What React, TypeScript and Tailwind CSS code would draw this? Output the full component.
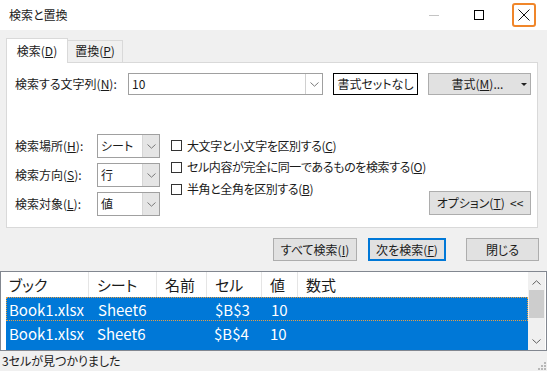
import React from 'react';

const Chevron = ({ up = false, color = '#606060' }: { up?: boolean; color?: string }) => (
  <svg width="9" height="5" viewBox="0 0 9 5" className="block">
    <path d={up ? 'M0.5 4.5 L4.5 0.8 L8.5 4.5' : 'M0.5 0.5 L4.5 4.2 L8.5 0.5'} fill="none" stroke={color} strokeWidth="1" />
  </svg>
);

function Combo({ value, width }: { value: string; width: string }) {
  return (
    <div className={`flex h-[24px] ${width} border border-[#a0a0a0] bg-white`}>
      <div className="flex flex-1 items-center pl-[3px] text-[12px] leading-none">{value}</div>
      <div className="flex w-[17px] items-center justify-center border-l border-[#d6d6d6] bg-[#e5e5e5]">
        <Chevron color="#7a7a7a" />
      </div>
    </div>
  );
}

function Check({ label, hk, h }: { label: string; hk: string; h: string }) {
  return (
    <div className={`flex ${h} items-center`}>
      <div className="h-[11px] w-[11px] border border-[#333] bg-white" />
      <span className="ml-[5px] text-[12px] leading-none tracking-[-0.4px]">
        {label}(<span className="underline">{hk}</span>)
      </span>
    </div>
  );
}

const rows = [
  { book: 'Book1.xlsx', sheet: 'Sheet6', cell: '$B$3', value: '10' },
  { book: 'Book1.xlsx', sheet: 'Sheet6', cell: '$B$4', value: '10' },
];

export default function App() {
  return (
    <div className="relative h-[371px] w-[547px] overflow-hidden whitespace-nowrap bg-[#f0f0f0] font-['Noto_Sans_CJK_JP','Noto_Sans',sans-serif] text-[#1a1a1a] [font-feature-settings:'palt']">
      {/* title bar */}
      <div className="flex h-[30px] items-center bg-white pl-[9px]">
        <span className="text-[12px] leading-none">検索と置換</span>
        <div className="ml-auto mr-[1px] flex h-full items-center">
          <div className="flex w-[45px] justify-center">
            <div className="h-px w-[10px] bg-[#c4c4c4]" />
          </div>
          <div className="flex w-[45px] justify-center">
            <div className="h-[10px] w-[10px] border border-black" />
          </div>
          <div className="flex w-[45px] justify-center">
            <div className="flex h-[24px] w-[24px] items-center justify-center rounded-[3px] border-2 border-[#f0862a]">
              <svg width="12" height="12" viewBox="0 0 12 12">
                <path d="M0.5 0.5 L11.5 11.5 M11.5 0.5 L0.5 11.5" stroke="#111" strokeWidth="1" />
              </svg>
            </div>
          </div>
        </div>
      </div>

      {/* tabs */}
      <div className="flex items-end pl-[6px] pt-[8px]">
        <div className="relative z-10 -mb-px flex h-[25px] w-[62px] items-center justify-center border border-b-0 border-[#d9d9d9] bg-white text-[12px] leading-none">
          検索(<span className="underline">D</span>)
        </div>
        <div className="flex h-[22px] w-[55px] items-center justify-center border border-b-0 border-l-0 border-[#d9d9d9] bg-[#f0f0f0] pb-[1px] text-[12px] leading-none">
          置換(<span className="underline">P</span>)
        </div>
      </div>

      {/* panel */}
      <div className="ml-[6px] h-[166px] w-[532px] border border-[#d9d9d9] bg-white pl-[8px] pr-[6px] pt-[10px]">
        <div className="flex h-[22px] items-center">
          <div className="w-[113px] text-[12px] leading-none">
            検索する文字列(<span className="underline">N</span>):
          </div>
          <div className="flex h-[22px] w-[195px] border border-[#a0a0a0] bg-white">
            <div className="flex flex-1 items-center pl-[3px] text-[12px] leading-none">10</div>
            <div className="flex w-[17px] items-center justify-center border-l border-[#d0d0d0]">
              <Chevron color="#7a7a7a" />
            </div>
          </div>
          <div className="ml-[10px] flex h-[22px] w-[85px] items-center justify-center border border-black bg-white text-[12px] leading-none">
            書式セットなし
          </div>
          <div className="relative ml-[10px] flex h-[22px] w-[103px] items-center justify-center border border-[#adadad] bg-[#e1e1e1] pr-[4px] text-[12px] leading-none">
            書式(<span className="underline">M</span>)...
            <svg width="6" height="3" viewBox="0 0 6 3" className="absolute right-[3px] top-[9px]">
              <path d="M0 0 L6 0 L3 3 Z" fill="#222" />
            </svg>
          </div>
        </div>

        <div className="mt-[39px] flex">
          <div className="flex flex-col gap-[5px]">
            {[
              ['検索場所', 'H', 'シート'],
              ['検索方向', 'S', '行'],
              ['検索対象', 'L', '値'],
            ].map(([l, k, v]) => (
              <div key={k} className="flex h-[24px] items-center">
                <div className="w-[82px] text-[12px] leading-none">
                  {l}(<span className="underline">{k}</span>):
                </div>
                <Combo value={v} width="w-[63px]" />
              </div>
            ))}
          </div>
          <div className="ml-[11px] flex flex-col pt-px">
            <Check label="大文字と小文字を区別する" hk="C" h="h-[21px]" />
            <Check label="セル内容が完全に同一であるものを検索する" hk="O" h="h-[22px]" />
            <Check label="半角と全角を区別する" hk="B" h="h-[22px]" />
          </div>
          <div className="ml-auto mb-[1px] flex h-[24px] w-[102px] items-center justify-center self-end border border-[#adadad] bg-[#e1e1e1] text-[12px] leading-none">
            オプション(<span className="underline">T</span>)&nbsp;&nbsp;&lt;&lt;
          </div>
        </div>
      </div>

      {/* action buttons */}
      <div className="mt-[10px] flex justify-end pr-[8px]">
        <div className="flex h-[23px] w-[84px] items-center justify-center border border-[#adadad] bg-[#e1e1e1] text-[12px] leading-none">
          すべて検索(<span className="underline">I</span>)
        </div>
        <div className="ml-[11px] flex h-[23px] w-[78px] items-center justify-center border-2 border-[#0078d7] bg-[#e1e1e1] text-[12px] leading-none">
          次を検索(<span className="underline">F</span>)
        </div>
        <div className="ml-[20px] flex h-[23px] w-[73px] items-center justify-center border border-[#adadad] bg-[#e1e1e1] text-[12px] leading-none">
          閉じる
        </div>
      </div>

      {/* results list */}
      <div className="mt-[10px] flex h-[80px] w-[547px] overflow-hidden border border-[#828790] bg-white">
        <div className="flex w-[527px] flex-col overflow-hidden">
          <div className="flex h-[25px] shrink-0 text-[15px] leading-none">
            {[
              ['ブック', 'w-[88px]'],
              ['シート', 'w-[68px]'],
              ['名前', 'w-[50px]'],
              ['セル', 'w-[55px]'],
              ['値', 'w-[36px]'],
            ].map(([t, w]) => (
              <div key={t} className={`flex ${w} items-center border-r border-[#e5e5e5] pl-[8px]`}>
                {t}
              </div>
            ))}
            <div className="flex items-center pl-[8px]">数式</div>
          </div>
          {rows.map((r, i) => (
            <div
              key={i}
              className={`ml-[5px] flex h-[24px] shrink-0 bg-[#0078d7] text-[15px] leading-none text-white ${
                i === 0 ? 'border border-dotted border-[#e8a046]' : ''
              }`}
            >
              <div className={`flex w-[83px] items-center ${i === 0 ? 'pl-[2px]' : 'pl-[3px]'}`}>{r.book}</div>
              <div className="flex w-[68px] items-center pl-[8px]">{r.sheet}</div>
              <div className="w-[50px]" />
              <div className="flex w-[55px] items-center pl-[7px]">{r.cell}</div>
              <div className="flex w-[36px] items-center pl-[8px]">{r.value}</div>
            </div>
          ))}
          <div className="ml-[5px] h-[24px] shrink-0 bg-[#0078d7]" />
        </div>
        <div className="flex w-[17px] flex-col bg-[#f0f0f0]">
          <div className="flex h-[18px] items-center justify-center pt-[2px]">
            <Chevron up />
          </div>
          <div className="mx-[1px] h-[28px] bg-[#cdcdcd]" />
          <div className="flex flex-1 items-end justify-center pb-[6px]">
            <Chevron />
          </div>
        </div>
      </div>

      {/* status bar */}
      <div className="flex h-[20px] items-center pl-[2px] text-[12px] leading-none">3セルが見つかりました</div>
      <svg width="9" height="9" viewBox="0 0 9 9" className="absolute bottom-[1px] right-[1px]">
        {[
          [7, 1],
          [4, 4],
          [7, 4],
          [1, 7],
          [4, 7],
          [7, 7],
        ].map(([x, y]) => (
          <rect key={`${x}-${y}`} x={x} y={y} width="2" height="2" fill="#b8b8b8" />
        ))}
      </svg>
    </div>
  );
}
